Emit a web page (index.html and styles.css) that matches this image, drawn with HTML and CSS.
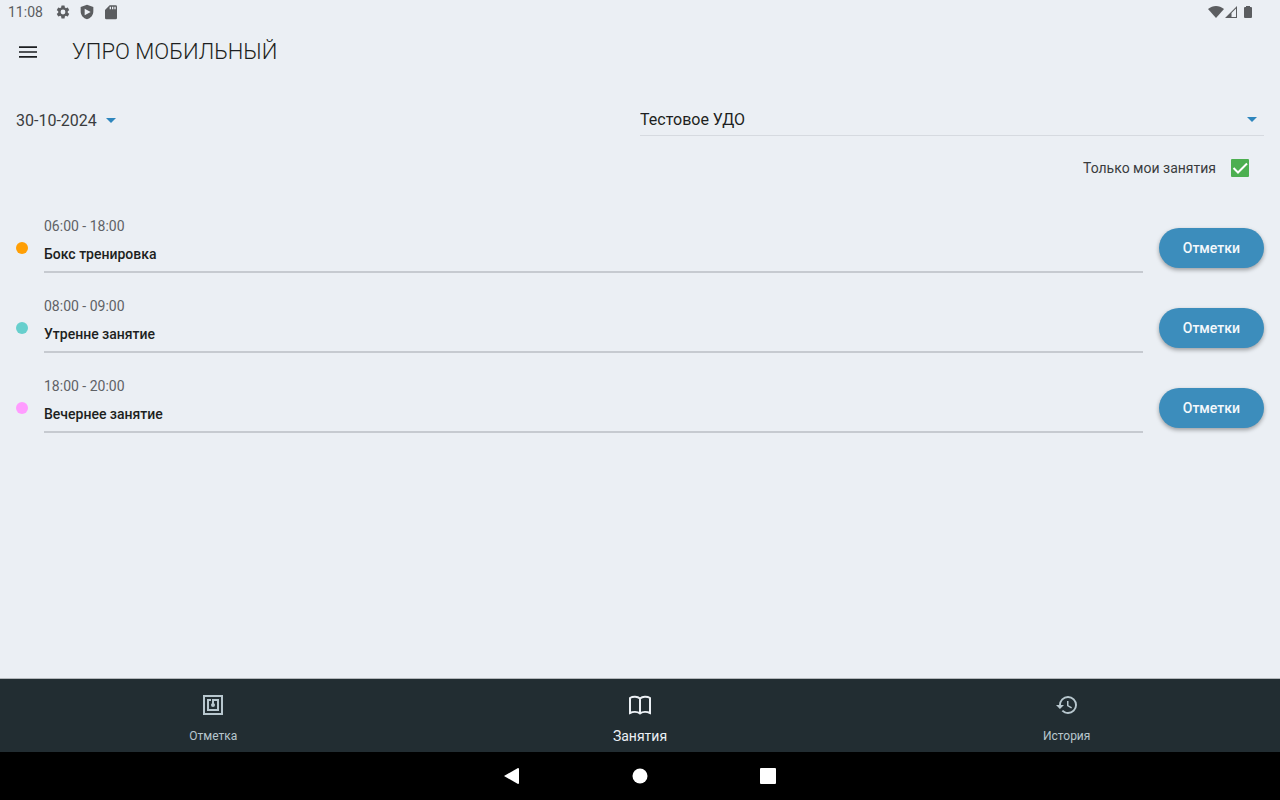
FILE: index.html
```html
<!DOCTYPE html>
<html lang="ru">
<head>
    <meta charset="UTF-8">
    <meta name="viewport" content="width=device-width, initial-scale=1.0">
    <title>УПРО Мобильный</title>
    <link rel="stylesheet" href="styles.css">
</head>
<body>

    <div class="status-bar">
        <span class="clock">11:08</span>
        <svg class="status-icon" viewBox="0 0 24 24"><path d="M19.14 12.94c.04-.3.06-.61.06-.94s-.02-.64-.07-.94l2.03-1.58a.49.49 0 0 0 .12-.61l-1.92-3.32a.49.49 0 0 0-.59-.22l-2.39.96a7 7 0 0 0-1.62-.94l-.36-2.54a.48.48 0 0 0-.48-.41h-3.84a.48.48 0 0 0-.47.41l-.36 2.54c-.59.24-1.13.57-1.62.94l-2.39-.96a.48.48 0 0 0-.59.22L2.74 8.87a.48.48 0 0 0 .12.61l2.03 1.58c-.05.3-.09.63-.09.94s.02.64.07.94l-2.03 1.58a.49.49 0 0 0-.12.61l1.92 3.32c.12.22.37.29.59.22l2.39-.96c.5.38 1.03.7 1.62.94l.36 2.54c.05.24.24.41.48.41h3.84c.24 0 .44-.17.47-.41l.36-2.54a7 7 0 0 0 1.62-.94l2.39.96c.22.08.47 0 .59-.22l1.92-3.32a.48.48 0 0 0-.12-.61zM12 15.6a3.6 3.6 0 1 1 0-7.2 3.6 3.6 0 0 1 0 7.2z"/></svg>
        <svg class="status-icon" viewBox="0 0 24 24"><path fill-rule="evenodd" d="M12 1 2.500 4.500V11c0 5.800 4 10.700 9.500 12 5.500-1.300 9.500-6.200 9.500-12V4.500zM8.500 7l9 5-9 5z"/></svg>
        <svg class="status-icon" viewBox="0 0 24 24"><path d="M19 2h-9L3 9v12a2 2 0 0 0 2 2h14a2 2 0 0 0 2-2V4a2 2 0 0 0-2-2zm-7 6h-2V4h2zm3.500 0h-2V4h2zM19 8h-2V4h2z"/></svg>
        <div class="status-right">
            <svg class="status-signal" viewBox="0 0 16 16"><path d="M0 5C5 1 11 1 16 5L8 14z"/></svg>
            <svg class="status-signal" viewBox="0 0 16 16"><path fill-rule="evenodd" d="M13 2v12H1zM12 4.500 7.500 9v4H12z"/></svg>
            <svg class="status-signal" viewBox="0 0 16 16"><path d="M6 2h4v1h1a1 1 0 0 1 1 1v9a1 1 0 0 1-1 1H5a1 1 0 0 1-1-1V4a1 1 0 0 1 1-1h1z"/></svg>
        </div>
    </div>

    <header class="app-bar">
        <button type="button" class="menu-button" aria-label="Меню">
            <svg viewBox="0 0 24 24"><path d="M3 17.700h18v-1.600H3zm0-4.900h18v-1.600H3zm0-6.500v1.600h18V6.300z"/></svg>
        </button>
        <h1>УПРО МОБИЛЬНЫЙ</h1>
    </header>

    <main>
        <div class="filters">
            <button type="button" class="date-button">
                30-10-2024
                <svg class="arrow" viewBox="0 0 10 5"><path d="M0 0h10L5 5z"/></svg>
            </button>
            <div class="place">
                <select aria-label="Организация">
                    <option>Тестовое УДО</option>
                </select>
                <svg class="arrow" viewBox="0 0 10 5"><path d="M0 0h10L5 5z"/></svg>
            </div>
        </div>

        <div class="only-mine">
            <label for="onlyMine">Только мои занятия</label>
            <span class="check">
                <input type="checkbox" id="onlyMine" checked>
                <svg viewBox="0 0 18 18"><path d="M2.500 9l4.500 4.500 9-9"/></svg>
            </span>
        </div>

        <ul class="lessons">
            <li class="lesson">
                <span class="dot orange"></span>
                <div class="lesson-info">
                    <p class="time">06:00 - 18:00</p>
                    <p class="name">Бокс тренировка</p>
                </div>
                <button type="button" class="marks-button">Отметки</button>
            </li>
            <li class="lesson">
                <span class="dot teal"></span>
                <div class="lesson-info">
                    <p class="time">08:00 - 09:00</p>
                    <p class="name">Утренне занятие</p>
                </div>
                <button type="button" class="marks-button">Отметки</button>
            </li>
            <li class="lesson">
                <span class="dot pink"></span>
                <div class="lesson-info">
                    <p class="time">18:00 - 20:00</p>
                    <p class="name">Вечернее занятие</p>
                </div>
                <button type="button" class="marks-button">Отметки</button>
            </li>
        </ul>
    </main>

    <nav class="tabs">
        <a href="#mark" class="tab">
            <svg viewBox="0 0 24 24"><path d="M22 2H2v20h20zM20 20H4V4h16zM18 6h-7v4.280c-.6.35-1 .98-1 1.720a2 2 0 0 0 4 0c0-.74-.4-1.380-1-1.720V8h3v8H8V8h2V6H6v12h12z"/></svg>
            Отметка
        </a>
        <a href="#lessons" class="tab active">
            <svg viewBox="0 0 24 24"><path class="line" d="M12 5.500C9.500 3.500 5 3.300 2 5v15c3-1.400 7.500-1.200 10 .5 2.500-1.700 7-1.900 10-.5V5c-3-1.700-7.500-1.500-10 .5zm0 0v15"/></svg>
            Занятия
        </a>
        <a href="#history" class="tab">
            <svg viewBox="0 0 24 24"><path d="M13 3a9 9 0 0 0-9 9H1l3.890 3.890.07.14L9 12H6c0-3.870 3.130-7 7-7s7 3.130 7 7-3.130 7-7 7c-1.930 0-3.680-.79-4.940-2.060l-1.420 1.420A8.950 8.950 0 0 0 13 21a9 9 0 0 0 0-18zm-1 5v5l4.280 2.540.72-1.210-3.500-2.080V8z"/></svg>
            История
        </a>
    </nav>

    <div class="system-nav">
        <button type="button" aria-label="Назад">
            <svg viewBox="0 0 16 16"><path d="M14 0a1 1 0 0 1 1 1v14a1 1 0 0 1-1 1L0 8z"/></svg>
        </button>
        <button type="button" aria-label="Домой">
            <svg viewBox="0 0 16 16"><circle cx="8" cy="8" r="7.500"/></svg>
        </button>
        <button type="button" aria-label="Недавние">
            <svg viewBox="0 0 16 16"><rect width="16" height="16" rx="1"/></svg>
        </button>
    </div>

</body>
</html>
```
FILE: styles.css
```css
* {
    margin: 0;
    padding: 0;
    box-sizing: border-box;
}

body {
    display: flex;
    flex-direction: column;
    min-height: 100vh;
    background-color: #ebeff4;
    color: #1d1f21;
    font-family: Roboto, sans-serif;
    font-size: 14px;
}

button,
select {
    border: none;
    background: none;
    color: inherit;
    font: inherit;
    cursor: pointer;
}

svg {
    display: block;
    fill: currentColor;
}

/* Android status bar */
.status-bar {
    display: flex;
    align-items: center;
    gap: 8px;
    height: 24px;
    padding: 0 24px 0 8px;
    color: #5b5d60;
}

.clock {
    margin-right: 4px;
    font-size: 14px;
}

.status-icon {
    width: 16px;
    height: 16px;
}

.status-right {
    display: flex;
    margin-left: auto;
}

.status-signal {
    width: 16px;
    height: 16px;
}

/* App bar */
.app-bar {
    display: flex;
    align-items: center;
    gap: 16px;
    height: 56px;
}

.menu-button {
    display: flex;
    align-items: center;
    justify-content: center;
    width: 56px;
    height: 56px;
}

.menu-button svg {
    width: 24px;
    height: 24px;
}

h1 {
    font-size: 22px;
    font-weight: 300;
    line-height: 28px;
}

/* Content */
main {
    flex: 1;
    padding: 24px 16px;
}

.filters {
    display: grid;
    grid-template-columns: 1fr 1fr;
    font-size: 16px;
}

.arrow {
    width: 10px;
    height: 5px;
    color: #2e86bd;
}

.date-button {
    display: flex;
    align-items: center;
    justify-self: start;
    gap: 9px;
    height: 32px;
    color: #3a3c3e;
}

.place {
    display: flex;
    align-items: center;
    position: relative;
    height: 32px;
    border-bottom: 1px solid #d6dae0;
}

.place select {
    width: 100%;
    height: 30px;
    appearance: none;
    outline: none;
}

.place .arrow {
    position: absolute;
    right: 7px;
    pointer-events: none;
}

.only-mine {
    display: flex;
    align-items: center;
    justify-content: flex-end;
    gap: 15px;
    height: 48px;
    margin-top: 8px;
    padding-right: 15px;
    color: #3a3c3e;
}

.check {
    position: relative;
}

.check input {
    display: block;
    width: 18px;
    height: 18px;
    appearance: none;
    border: 2px solid #6b6f73;
    border-radius: 1px;
}

.check input:checked {
    border-color: #4caf50;
    background-color: #4caf50;
}

.check svg {
    position: absolute;
    inset: 0;
    fill: none;
    stroke: #fff;
    stroke-width: 2;
    pointer-events: none;
}

/* Lessons */
.lessons {
    margin-top: 16px;
    list-style: none;
}

.lesson {
    display: flex;
    align-items: center;
    gap: 16px;
    height: 80px;
}

.dot {
    width: 12px;
    height: 12px;
    border-radius: 50%;
}

.orange {
    background-color: #ff9f05;
}

.teal {
    background-color: #67cfcd;
}

.pink {
    background-color: #ff9cff;
}

.lesson-info {
    flex: 1;
    align-self: flex-start;
    margin-top: 8px;
    padding-bottom: 7px;
    border-bottom: 2px solid #c6cad0;
    line-height: 20px;
}

.time {
    margin-bottom: 8px;
    color: #5f6266;
}

.name {
    font-weight: 500;
}

.marks-button {
    height: 40px;
    padding: 0 24px;
    border-radius: 20px;
    background-color: #3c8dbc;
    box-shadow: 0 2px 4px rgba(0, 0, 0, 0.35);
    color: #f4f8fb;
    font-weight: 500;
}

/* Bottom tabs */
.tabs {
    display: grid;
    grid-template-columns: 1fr 1fr 1fr;
    height: 74px;
    border-top: 1px solid #b3b7bb;
    background-color: #222d32;
}

.tab {
    display: flex;
    flex-direction: column;
    align-items: center;
    justify-content: center;
    gap: 10px;
    padding-top: 6px;
    color: #b8c7ce;
    font-size: 12px;
    line-height: 18px;
    text-decoration: none;
}

.tab svg {
    width: 24px;
    height: 24px;
}

.tab .line {
    fill: none;
    stroke: currentColor;
    stroke-width: 2;
}

.active {
    color: #ecf0f5;
    font-size: 14px;
}

/* Android navigation buttons */
.system-nav {
    display: flex;
    justify-content: center;
    height: 48px;
    background-color: #000;
    color: #fff;
}

.system-nav button {
    display: flex;
    align-items: center;
    justify-content: center;
    width: 128px;
}

.system-nav svg {
    width: 16px;
    height: 16px;
}
```
